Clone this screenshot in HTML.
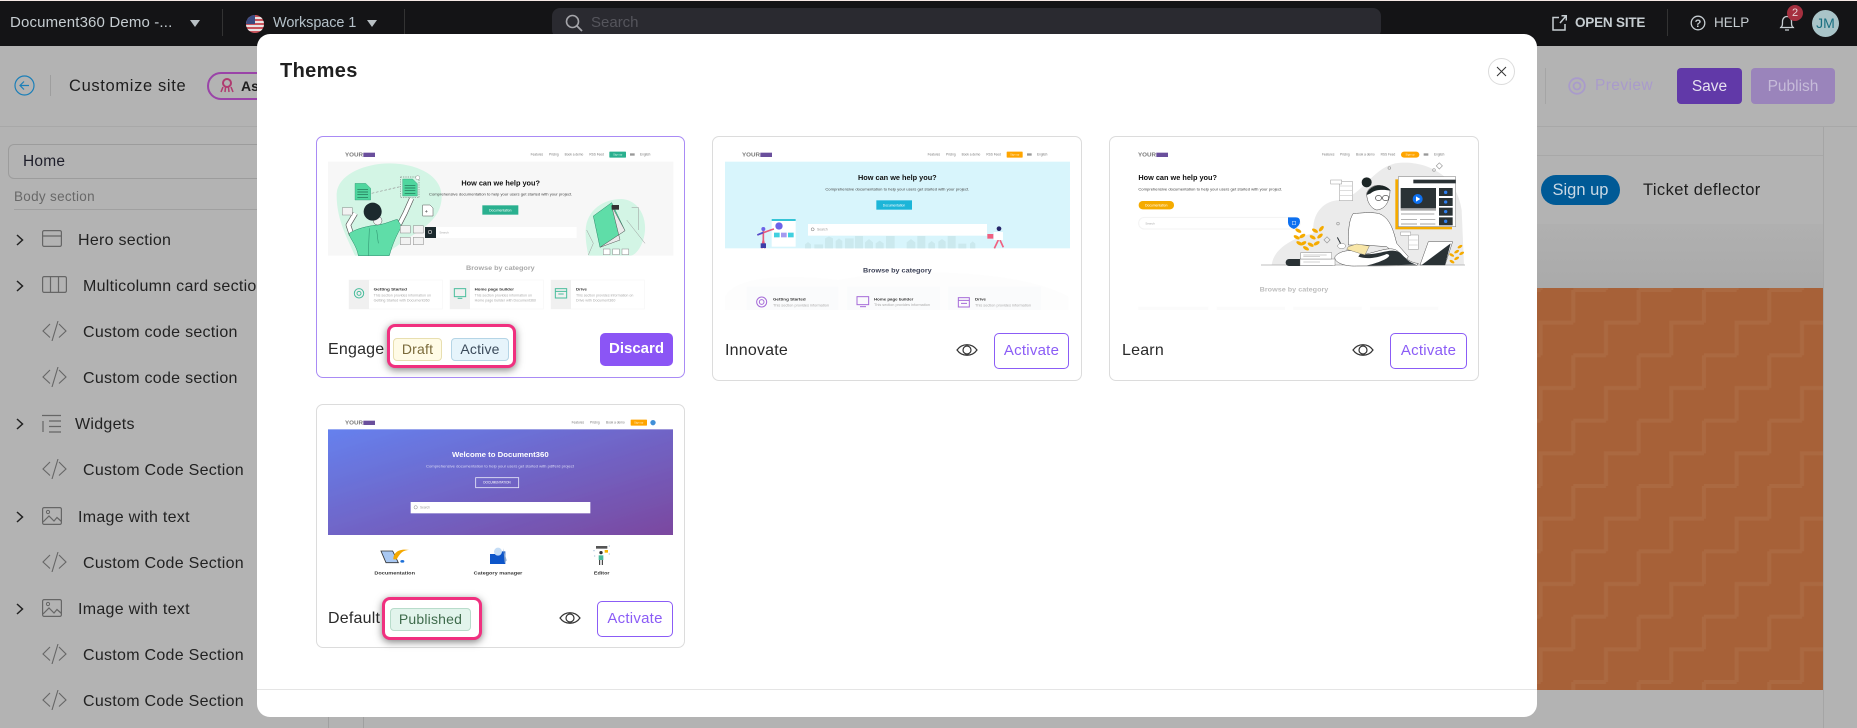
<!DOCTYPE html>
<html lang="en"><head><meta charset="utf-8"><title>Themes</title>
<style>
*{box-sizing:border-box}
html,body{margin:0;padding:0;width:1857px;height:728px;overflow:hidden;background:#b3b3b3;font-family:"Liberation Sans",sans-serif}
.a{position:absolute;white-space:nowrap}
.t{position:absolute;white-space:nowrap;line-height:20px;height:20px}
.top{position:absolute;left:0;top:0;width:1857px;height:46px;background:#141416;border-top:1px solid #f6e9e5}
.side{font-size:16px;color:#222;letter-spacing:.28px}
.card{position:absolute;background:#fff;border:1px solid #dcdcdc;border-radius:7px}
.name{font-size:16px;color:#2a2a2a;letter-spacing:.2px}
.chip{position:absolute;height:23px;border-radius:4px;font-size:14px;line-height:21px;text-align:center;letter-spacing:.2px}
.hl{position:absolute;border:3px solid #f0307f;border-radius:8px;box-shadow:0 2px 8px rgba(0,0,0,.5)}
.act{position:absolute;height:36px;border:1.300px solid #8b5cf6;border-radius:5px;color:#8b5cf6;font-size:15px;line-height:33px;text-align:center;letter-spacing:.25px;background:#fff}
svg{display:block}
svg text{font-family:"Liberation Sans",sans-serif}
</style></head><body>
<svg width="0" height="0" style="position:absolute">
<defs>
<symbol id="code" viewBox="0 0 25 20"><path d="M8 3 1 10l7 6.500M16 0 10 20M17 3l7 7-7 6.500" fill="none" stroke="#666" stroke-width="1.100"/></symbol>
<symbol id="img" viewBox="0 0 20 18"><rect x=".6" y=".6" width="18.800" height="16.800" rx="1.500" fill="none" stroke="#666" stroke-width="1.200"/><circle cx="6" cy="5" r="1.600" fill="none" stroke="#666"/><path d="M1 15l6-6 5 5 3-3.500 4.500 4" fill="none" stroke="#666" stroke-width="1.200"/></symbol>
<symbol id="chev" viewBox="0 0 8 12"><path d="M1 1l5.500 5L1 11" fill="none" stroke="#222" stroke-width="1.500"/></symbol>
<symbol id="eye" viewBox="0 0 22 16"><path d="M1 8C6 1 16 1 21 8 16 15 6 15 1 8Z" fill="none" stroke="#333" stroke-width="1.200"/><circle cx="11" cy="8" r="4" fill="none" stroke="#333" stroke-width="1.200"/></symbol>
<filter id="b" x="-5%" y="-5%" width="110%" height="110%"><feGaussianBlur stdDeviation="1"/></filter>
<pattern id="stair" patternUnits="userSpaceOnUse" width="65.330" height="65.330" x="1573.300" y="290"><path d="M65.330 0V32.670H32.670V65.330H0M0 0H32.670M0 0V32.670" fill="none" stroke="#ab6941" stroke-width="4"/></pattern>
</defs>
</svg>

<!-- top bar -->
<div class="top"></div>
<div class="t" style="left:10px;top:13px;font-size:15px;color:#c6cdd1;letter-spacing:.15px">Document360 Demo -...</div>
<svg class="a" style="left:190px;top:20px" width="10" height="7"><path d="M0 0h10L5 7z" fill="#b9c0c4"/></svg>
<div class="a" style="left:222px;top:9px;width:1px;height:27px;background:#333"></div>
<svg class="a" style="left:246px;top:15px" width="18" height="18" viewBox="0 0 18 18"><defs><clipPath id="fl"><circle cx="9" cy="9" r="9"/></clipPath></defs><g clip-path="url(#fl)"><rect width="18" height="18" fill="#c9545c"/><path d="M0 3h18M0 7h18M0 11h18M0 15h18" stroke="#e8e4e4" stroke-width="2"/><rect width="9" height="9" fill="#3b4a80"/></g></svg>
<div class="t" style="left:273px;top:13px;font-size:14.500px;color:#b4c0c8;letter-spacing:-.1px">Workspace 1</div>
<svg class="a" style="left:367px;top:20px" width="10" height="7"><path d="M0 0h10L5 7z" fill="#b9c0c4"/></svg>
<div class="a" style="left:404px;top:9px;width:1px;height:27px;background:#333"></div>
<div class="a" style="left:552px;top:8px;width:829px;height:30px;background:#2a2a30;border-radius:8px"></div>
<svg class="a" style="left:565px;top:14px" width="18" height="18" viewBox="0 0 18 18"><circle cx="7.500" cy="7.500" r="6" fill="none" stroke="#a5a5aa" stroke-width="1.600"/><path d="M12 12l5 5" stroke="#a5a5aa" stroke-width="1.800"/></svg>
<div class="t" style="left:591px;top:13px;font-size:15px;color:#55555c">Search</div>
<svg class="a" style="left:1552px;top:15px" width="15" height="16" viewBox="0 0 15 16"><path d="M7 2.500H1v12.500h12V9M8 8l6-7M9.500 .8H14.300V5.500" fill="none" stroke="#c6cdd1" stroke-width="1.500"/></svg>
<div class="t" style="left:1575px;top:13px;font-size:13.500px;font-weight:bold;color:#c6cdd1;letter-spacing:-.2px">OPEN SITE</div>
<div class="a" style="left:1667px;top:9px;width:1px;height:27px;background:#333"></div>
<svg class="a" style="left:1690px;top:15px" width="16" height="16" viewBox="0 0 16 16"><circle cx="8" cy="8" r="6.800" fill="none" stroke="#c6cdd1" stroke-width="1.300"/><text x="8" y="12" font-size="11" font-weight="bold" text-anchor="middle" fill="#c6cdd1">?</text></svg>
<div class="t" style="left:1714px;top:13px;font-size:13.500px;color:#c6cdd1;letter-spacing:0">HELP</div>
<svg class="a" style="left:1779px;top:14px" width="16" height="18" viewBox="0 0 16 18"><path d="M2 13.500c1.500-1.500 1.500-3 1.500-6C3.500 4.500 5.500 2.500 8 2.500s4.500 2 4.500 5c0 3 0 4.500 1.500 6ZM1 13.500h14M6 16h4" fill="none" stroke="#c6cdd1" stroke-width="1.300"/></svg>
<div class="a" style="left:1787px;top:5px;width:16px;height:16px;border-radius:50%;background:#a5303f;color:#e6d5d7;font-size:11px;line-height:16px;text-align:center">2</div>
<div class="a" style="left:1812px;top:10px;width:27px;height:27px;border-radius:50%;background:#a9c4c8;color:#1a6f80;font-size:14px;line-height:27px;text-align:center">JM</div>

<!-- header -->
<div class="a" style="left:0;top:126px;width:1857px;height:1px;background:#a8a8a8"></div>
<svg class="a" style="left:14px;top:75px" width="21" height="21" viewBox="0 0 21 21"><circle cx="10.500" cy="10.500" r="9.500" fill="none" stroke="#1b7fb8" stroke-width="1.200"/><path d="M15 10.500H6M10 6.500l-4 4 4 4" fill="none" stroke="#1b7fb8" stroke-width="1.200"/></svg>
<div class="a" style="left:50px;top:75px;width:1px;height:21px;background:#9e9e9e"></div>
<div class="t" style="left:69px;top:76px;font-size:16.500px;color:#1e1e1e;letter-spacing:.65px">Customize site</div>
<div class="a" style="left:207px;top:72px;width:70px;height:28px;border:2px solid #9a44a8;border-radius:14px"></div>
<svg class="a" style="left:220px;top:78px" width="14" height="15" viewBox="0 0 14 15"><circle cx="7" cy="5" r="4" fill="none" stroke="#b03a70" stroke-width="2"/><path d="M3 9l-2 5M5.500 9.500 5 14M8.500 9.500 9 14M11 9l2 5" stroke="#b03a70" stroke-width="1.500" fill="none"/></svg>
<div class="t" style="left:241px;top:76px;font-size:14px;font-weight:bold;color:#1e1e1e">As</div>
<div class="a" style="left:1545px;top:68px;width:1px;height:36px;background:#a5a5a5"></div>
<svg class="a" style="left:1568px;top:77px" width="18" height="18" viewBox="0 0 18 18"><circle cx="9" cy="9" r="7.800" fill="none" stroke="#a99bcb" stroke-width="1.800"/><circle cx="9" cy="9" r="3.500" fill="none" stroke="#a99bcb" stroke-width="1.800"/></svg>
<div class="t" style="left:1595px;top:76px;font-size:15.500px;color:#a99bcb;letter-spacing:.4px">Preview</div>
<div class="a" style="left:1677px;top:68px;width:65px;height:36px;background:#6139a8;border-radius:4px;color:#e6e0f0;font-size:15.500px;line-height:37px;text-align:center">Save</div>
<div class="a" style="left:1751px;top:68px;width:84px;height:36px;background:#9a84bb;border-radius:4px;color:#c6bbd9;font-size:15.500px;line-height:37px;text-align:center">Publish</div>

<!-- content area -->
<div class="a" style="left:1537px;top:155px;width:286px;height:1px;background:#a8a8a8"></div>
<div class="a" style="left:1537px;top:224px;width:286px;height:64px;background:linear-gradient(#b0b0b0,#aaaaaa)"></div>
<div class="a" style="left:1823px;top:127px;width:1px;height:601px;background:#a5a5a5"></div>
<div class="a" style="left:1541px;top:175px;width:79px;height:30px;border-radius:15px;background:#005a96;color:#c9d8e4;font-size:16.500px;line-height:30px;text-align:center">Sign up</div>
<div class="t" style="left:1643px;top:180px;font-size:16.500px;color:#1e1e1e;letter-spacing:.4px">Ticket deflector</div>
<svg class="a" style="left:1537px;top:288px" width="286" height="402" viewBox="1537 288 286 402"><rect x="1537" y="288" width="286" height="402" fill="#a76138"/><rect x="1537" y="288" width="286" height="402" fill="url(#stair)"/></svg>
<div class="a" style="left:328px;top:716px;width:1px;height:12px;background:#a0a0a0"></div>
<div class="a" style="left:363px;top:716px;width:1px;height:12px;background:#a0a0a0"></div>

<!-- sidebar -->
<div class="a" style="left:8px;top:144px;width:270px;height:35px;border:1px solid #9c9c9c;border-radius:6px"></div>
<div class="t" style="left:23px;top:152px;font-size:15.500px;color:#1e1e2a;letter-spacing:.2px">Home</div>
<div class="t" style="left:14px;top:187px;font-size:13.500px;font-weight:normal;color:#686868;letter-spacing:.3px">Body section</div>
<div class="a" style="left:14px;top:209px;width:250px;height:1px;background:#a0a0a0"></div>

<svg class="a" style="left:16px;top:234px" width="8" height="12"><use href="#chev"/></svg>
<svg class="a" style="left:42px;top:230px" width="20" height="17" viewBox="0 0 20 17"><rect x=".6" y=".6" width="18.800" height="15.800" rx="1.500" fill="none" stroke="#666" stroke-width="1.200"/><path d="M1 6h18" stroke="#666" stroke-width="1.200"/></svg>
<div class="t side" style="left:78px;top:231px">Hero section</div>

<svg class="a" style="left:16px;top:280px" width="8" height="12"><use href="#chev"/></svg>
<svg class="a" style="left:42px;top:276px" width="25" height="17" viewBox="0 0 25 17"><rect x=".6" y=".6" width="23.800" height="15.800" rx="1.500" fill="none" stroke="#666" stroke-width="1.200"/><path d="M8.500 1v15M16.500 1v15" stroke="#666" stroke-width="1.200"/></svg>
<div class="t side" style="left:83px;top:277px">Multicolumn card section</div>

<svg class="a" style="left:42px;top:321px" width="25" height="20"><use href="#code"/></svg>
<div class="t side" style="left:83px;top:323px">Custom code section</div>
<svg class="a" style="left:42px;top:367px" width="25" height="20"><use href="#code"/></svg>
<div class="t side" style="left:83px;top:369px">Custom code section</div>

<svg class="a" style="left:16px;top:418px" width="8" height="12"><use href="#chev"/></svg>
<svg class="a" style="left:42px;top:414px" width="20" height="20" viewBox="0 0 20 20"><path d="M0 1.500h19M1 7v11M7 7h12M7 12.500h12M7 18h12" fill="none" stroke="#666" stroke-width="1.200"/></svg>
<div class="t side" style="left:75px;top:415px">Widgets</div>

<svg class="a" style="left:42px;top:459px" width="25" height="20"><use href="#code"/></svg>
<div class="t side" style="left:83px;top:461px">Custom Code Section</div>

<svg class="a" style="left:16px;top:511px" width="8" height="12"><use href="#chev"/></svg>
<svg class="a" style="left:42px;top:507px" width="20" height="18"><use href="#img"/></svg>
<div class="t side" style="left:78px;top:508px">Image with text</div>

<svg class="a" style="left:42px;top:552px" width="25" height="20"><use href="#code"/></svg>
<div class="t side" style="left:83px;top:554px">Custom Code Section</div>

<svg class="a" style="left:16px;top:603px" width="8" height="12"><use href="#chev"/></svg>
<svg class="a" style="left:42px;top:599px" width="20" height="18"><use href="#img"/></svg>
<div class="t side" style="left:78px;top:600px">Image with text</div>

<svg class="a" style="left:42px;top:644px" width="25" height="20"><use href="#code"/></svg>
<div class="t side" style="left:83px;top:646px">Custom Code Section</div>
<svg class="a" style="left:42px;top:690px" width="25" height="20"><use href="#code"/></svg>
<div class="t side" style="left:83px;top:692px">Custom Code Section</div>

<!-- modal -->
<div class="a" style="left:257px;top:34px;width:1280px;height:683px;background:#fff;border-radius:13px"></div>
<div class="t" style="left:280px;top:60px;font-size:20px;font-weight:bold;color:#1f1f1f;line-height:22px;height:22px;letter-spacing:.35px">Themes</div>
<div class="a" style="left:1488px;top:58px;width:27px;height:27px;border:1px solid #dcdcdc;border-radius:50%"></div>
<svg class="a" style="left:1496px;top:66px" width="11" height="11"><path d="M1 1l9 9M10 1l-9 9" stroke="#333" stroke-width="1"/></svg>
<div class="a" style="left:257px;top:689px;width:1280px;height:1px;background:#e5e5e5"></div>

<!-- cards -->
<div class="card" style="left:316px;top:136px;width:369px;height:242px;border-color:#a98bf5"></div>
<div class="card" style="left:712px;top:136px;width:370px;height:245px"></div>
<div class="card" style="left:1109px;top:136px;width:370px;height:245px"></div>
<div class="card" style="left:316px;top:404px;width:369px;height:244px"></div>

<!-- Engage thumb -->
<svg class="a" style="left:310px;top:130px" width="390" height="260" viewBox="0 0 1170 780"><g filter="url(#b)">
<text x="105" y="80" font-size="17" font-weight="bold" fill="#777" textLength="54" lengthAdjust="spacingAndGlyphs">YOUR</text><rect x="160" y="68" width="35" height="13" fill="#6b4f9c"/>
<g font-size="9.500" fill="#777"><text x="662" y="77">Features</text><text x="717" y="77">Pricing</text><text x="764" y="77">Book a demo</text><text x="838" y="77">RSS Feed</text><text x="990" y="77">English</text></g>
<rect x="898" y="65" width="50" height="18" rx="2" fill="#2bb08f"/><text x="923" y="77" font-size="8" text-anchor="middle" fill="#d8f5ec">Sign up</text><rect x="960" y="70" width="14" height="7" fill="#999"/>
<rect x="54" y="95" width="1036" height="282" fill="#f7f7f7"/>
<path d="M80 190C85 130 170 100 240 100 330 102 395 140 395 200 395 270 330 300 280 335 250 355 225 377 205 377H135C115 330 78 270 80 190Z" fill="#d3f5e5"/>
<path d="M135 160h32l15 15v35h-47z" fill="#4fd69e" stroke="#2a8a6a"/><path d="M142 178h32M142 186h32M142 194h32M142 202h32" stroke="#1e6a50" stroke-width="2"/>
<path d="M185 190 270 170" stroke="#999" stroke-dasharray="8 5" stroke-width="2"/>
<rect x="272" y="141" width="55" height="62" fill="none" stroke="#888" stroke-dasharray="4 3" stroke-width="2"/><path d="M278 147h30l14 14v37h-44z" fill="#4fd69e" stroke="#2a8a6a"/><path d="M284 166h32M284 174h32M284 182h32M284 190h32" stroke="#1e6a50" stroke-width="2"/><circle cx="323" cy="143" r="6" fill="#fff" stroke="#666"/>
<path d="M125 315 115 285 136 250" fill="none" stroke="#555" stroke-width="16" stroke-linejoin="round"/><path d="M125 315 115 285 136 250" fill="none" stroke="#fff" stroke-width="12" stroke-linejoin="round"/>
<path d="M262 295 285 250 305 205" fill="none" stroke="#555" stroke-width="15" stroke-linejoin="round"/><path d="M262 295 285 250 305 205" fill="none" stroke="#fff" stroke-width="11" stroke-linejoin="round"/>
<path d="M145 377C140 345 115 320 118 310 140 295 175 288 200 285 225 283 250 270 262 268L275 290C262 310 248 340 238 377Z" fill="#5fdda8" stroke="#2a8a6a" stroke-width="1.500"/><path d="M178 295 175 377M200 300 205 340" stroke="#2a8a6a" stroke-width="1.500" fill="none"/>
<ellipse cx="203" cy="272" rx="13" ry="13" fill="#f4f4f4" stroke="#555" stroke-width="1.500"/><circle cx="188" cy="245" r="27" fill="#1e2a2e"/>
<g fill="#f2f2f2" stroke="#888" stroke-width="1.500"><rect x="97" y="233" width="30" height="22"/><rect x="271" y="287" width="30" height="22"/><rect x="310" y="287" width="30" height="22"/><rect x="271" y="322" width="30" height="22"/><rect x="310" y="322" width="30" height="22"/></g>
<path d="M338 225h22l9 9v24h-31z" fill="#fff" stroke="#555" stroke-width="1.500"/><path d="M349 240v8M345 244h8" stroke="#555" stroke-width="1.500"/>
<path d="M827 300C830 240 880 207 935 207 985 210 1008 260 1005 300 1003 340 980 377 960 377H835C830 350 826 330 827 300Z" fill="#d3f5e5"/>
<path d="M850 258 905 218 945 302 870 352Z" fill="#5fdda8" stroke="#2a8a6a" stroke-width="1.500"/><path d="M905 228 945 302 870 352 930 330Z" fill="#eaeaea" stroke="#555" stroke-width="1.500"/><rect x="905" y="225" width="22" height="14" fill="#333"/>
<path d="M830 300 850 340 835 375M950 270 1005 340M965 232 985 232 985 300" stroke="#999" fill="none" stroke-width="1.500"/>
<g fill="#fff" stroke="#888" stroke-width="1.500"><rect x="880" y="357" width="20" height="17"/><rect x="908" y="357" width="20" height="17"/><rect x="936" y="357" width="20" height="17"/></g>
<text x="572" y="166" font-size="21" font-weight="bold" text-anchor="middle" fill="#111" textLength="236" lengthAdjust="spacingAndGlyphs">How can we help you?</text>
<text x="572" y="197" font-size="12" text-anchor="middle" fill="#444" textLength="430" lengthAdjust="spacingAndGlyphs">Comprehensive documentation to help your users get started with your project.</text>
<rect x="517" y="226" width="108" height="28" fill="#2bb08f"/><text x="571" y="244" font-size="10" text-anchor="middle" fill="#fff">Documentation</text>
<rect x="345" y="291" width="455" height="33" fill="#fff"/><rect x="345" y="291" width="33" height="33" fill="#1f2a2e"/><circle cx="360" cy="306" r="5" fill="none" stroke="#ccc" stroke-width="2"/><text x="388" y="311" font-size="9" fill="#aaa">Search</text>
<text x="571" y="420" font-size="19" font-weight="bold" text-anchor="middle" fill="#a8a8a8" textLength="206" lengthAdjust="spacingAndGlyphs">Browse by category</text>
<g fill="#fff" stroke="#f6f6f6" stroke-width="2"><rect x="117" y="450" width="280" height="87"/><rect x="420" y="450" width="280" height="87"/><rect x="723" y="450" width="280" height="87"/></g>
<g fill="#f0f0f0"><rect x="117" y="450" width="60" height="87"/><rect x="420" y="450" width="60" height="87"/><rect x="723" y="450" width="60" height="87"/></g>
<g fill="none" stroke="#49bd9c" stroke-width="3"><circle cx="147" cy="490" r="14"/><circle cx="147" cy="490" r="6"/><rect x="433" y="476" width="34" height="24"/><path d="M443 505h14"/><rect x="736" y="476" width="34" height="28"/><path d="M736 484h34M745 492h16"/></g>
<g font-size="12" font-weight="bold" fill="#333"><text x="191" y="482" textLength="100" lengthAdjust="spacingAndGlyphs">Getting Started</text><text x="494" y="482" textLength="118" lengthAdjust="spacingAndGlyphs">Home page builder</text><text x="798" y="482" textLength="33" lengthAdjust="spacingAndGlyphs">Drive</text></g>
<g font-size="10" fill="#aaa"><text x="191" y="500" textLength="172" lengthAdjust="spacingAndGlyphs">This section provides information on</text><text x="191" y="515" textLength="168" lengthAdjust="spacingAndGlyphs">Getting Started with Document360</text><text x="494" y="500" textLength="172" lengthAdjust="spacingAndGlyphs">This section provides information on</text><text x="494" y="515" textLength="184" lengthAdjust="spacingAndGlyphs">Home page builder with Document360</text><text x="798" y="500" textLength="172" lengthAdjust="spacingAndGlyphs">This section provides information on</text><text x="798" y="515" textLength="118" lengthAdjust="spacingAndGlyphs">Drive with Document360</text></g>
</g></svg>

<!-- Innovate thumb -->
<svg class="a" style="left:705px;top:130px" width="390" height="260" viewBox="0 0 1170 780"><g filter="url(#b)">
<text x="111" y="80" font-size="17" font-weight="bold" fill="#777" textLength="54" lengthAdjust="spacingAndGlyphs">YOUR</text><rect x="166" y="68" width="35" height="13" fill="#6b4f9c"/>
<g font-size="9.500" fill="#777"><text x="668" y="77">Features</text><text x="723" y="77">Pricing</text><text x="770" y="77">Book a demo</text><text x="844" y="77">RSS Feed</text><text x="996" y="77">English</text></g>
<rect x="905" y="65" width="48" height="18" rx="2" fill="#ffa500"/><text x="929" y="77" font-size="8" text-anchor="middle" fill="#fff0d0">Sign up</text><rect x="966" y="70" width="14" height="7" fill="#999"/>
<rect x="60" y="95" width="1035" height="260" fill="#d8f5fc"/>
<g fill="#cbe9ee"><path d="M360 355v-30l12-6 12 6v30zM392 355v-22l10-8 10 8v22zM420 355v-30h26v30zM450 355v-37h24v37zM480 355v-18l12-10 12 10v18zM512 355v-15l12-8 12 8v15zM543 355v-37h26v37zM605 355v-18l13-10 13 10v18zM637 355v-37h24v37zM670 355v-14l10-8 10 8v14zM700 355v-20l11-8 11 8v20zM728 355v-37h24v37zM760 355v-14h24v14zM795 355v-14l8-7 8 7v14zM300 355v-12l9-7 9 7v12zM328 355v-12h26v12z"/></g>
<rect x="200" y="267" width="72" height="83" fill="#fff"/><rect x="200" y="267" width="72" height="6" fill="#35c4d6"/><circle cx="222" cy="288" r="11" fill="#6c63e8"/><rect x="207" y="308" width="17" height="14" fill="#3fd0df"/><rect x="228" y="308" width="17" height="14" fill="#a59af0"/><rect x="249" y="308" width="17" height="14" fill="#3fd0df"/>
<path d="M175 300v30M157 315l40-15 10-3M175 330l-5 25M175 330l5 25" stroke="#e85a7a" stroke-width="5" fill="none"/><circle cx="175" cy="297" r="6" fill="#6c63e8"/><path d="M157 315l18-8" stroke="#5050d0" stroke-width="5"/><rect x="167" y="340" width="16" height="14" fill="#3c3ca8"/>
<circle cx="882" cy="296" r="7" fill="#26266a"/><path d="M868 355 880 330M895 352 885 330" stroke="#f06080" stroke-width="5"/><rect x="866" y="306" width="28" height="24" fill="#fff"/><rect x="847" y="312" width="18" height="14" fill="#f06080"/>
<rect x="309" y="282" width="537" height="35" fill="#fff"/><circle cx="323" cy="298" r="4.500" fill="none" stroke="#666" stroke-width="1.500"/><text x="336" y="302" font-size="10" fill="#999">Search</text>
<text x="577" y="150" font-size="21" font-weight="bold" text-anchor="middle" fill="#111" textLength="236" lengthAdjust="spacingAndGlyphs">How can we help you?</text>
<text x="577" y="182" font-size="12" text-anchor="middle" fill="#444" textLength="432" lengthAdjust="spacingAndGlyphs">Comprehensive documentation to help your users get started with your project.</text>
<rect x="514" y="211" width="107" height="28" fill="#1fb5d8"/><text x="567" y="229" font-size="10" text-anchor="middle" fill="#fff">Documentation</text>
<path d="M60 540V500C90 440 240 430 400 450 600 410 950 420 1090 500V540Z" fill="#fdfdfd"/>
<g fill="#fafbfc"><rect x="125" y="470" width="275" height="70"/><rect x="427" y="470" width="278" height="70"/><rect x="730" y="470" width="278" height="70"/></g>
<text x="577" y="428" font-size="19" font-weight="bold" text-anchor="middle" fill="#3a3f55" textLength="206" lengthAdjust="spacingAndGlyphs">Browse by category</text>
<g fill="none" stroke="#a56bd8" stroke-width="3"><circle cx="170" cy="516" r="15"/><circle cx="170" cy="516" r="7"/><rect x="456" y="500" width="35" height="24"/><path d="M465 530h18"/><rect x="760" y="503" width="33" height="28"/><path d="M760 511h33M768 520h18"/></g>
<g font-size="12" font-weight="bold" fill="#333"><text x="204" y="512" textLength="98" lengthAdjust="spacingAndGlyphs">Getting Started</text><text x="507" y="511" textLength="118" lengthAdjust="spacingAndGlyphs">Home page builder</text><text x="810" y="512" textLength="33" lengthAdjust="spacingAndGlyphs">Drive</text></g>
<g font-size="10" fill="#aaa"><text x="204" y="529" textLength="168" lengthAdjust="spacingAndGlyphs">This section provides information</text><text x="507" y="528" textLength="168" lengthAdjust="spacingAndGlyphs">This section provides information</text><text x="810" y="529" textLength="168" lengthAdjust="spacingAndGlyphs">This section provides information</text></g>
</g></svg>

<!-- Learn thumb -->
<svg class="a" style="left:1100px;top:130px" width="390" height="260" viewBox="0 0 1170 780"><g filter="url(#b)">
<text x="114" y="80" font-size="17" font-weight="bold" fill="#777" textLength="54" lengthAdjust="spacingAndGlyphs">YOUR</text><rect x="169" y="68" width="35" height="13" fill="#6b4f9c"/>
<g font-size="9.500" fill="#777"><text x="666" y="77">Features</text><text x="720" y="77">Pricing</text><text x="768" y="77">Book a demo</text><text x="842" y="77">RSS Feed</text><text x="1002" y="77">English</text></g>
<rect x="903" y="65" width="55" height="18" rx="9" fill="#ffa500"/><text x="930" y="77" font-size="8" text-anchor="middle" fill="#fff0d0">Sign up</text><rect x="971" y="70" width="14" height="7" fill="#999"/>
<path d="M515 405C520 360 570 325 640 310 635 250 670 212 720 210 790 195 810 120 885 100 970 88 1070 130 1085 240L1092 405Z" fill="#ebebeb"/>
<path d="M483 405H1095" stroke="#aaa" stroke-width="2"/>
<text x="115" y="150" font-size="21" font-weight="bold" fill="#111" textLength="236" lengthAdjust="spacingAndGlyphs">How can we help you?</text>
<text x="115" y="182" font-size="12" fill="#444" textLength="432" lengthAdjust="spacingAndGlyphs">Comprehensive documentation to help your users get started with your project.</text>
<rect x="116" y="213" width="106" height="25" rx="12" fill="#f5ab00"/><text x="169" y="229" font-size="10" text-anchor="middle" fill="#fff">Documentation</text>
<rect x="116" y="262" width="484" height="35" rx="17" fill="#fff" stroke="#f3f3f3" stroke-width="3"/><text x="136" y="283" font-size="9" fill="#aaa">Search</text>
<path d="M564 262h24q12 0 12 12 0 14-18 23-18-6-18-20z" fill="#0b6ff0"/><rect x="577" y="274" width="10" height="10" fill="none" stroke="#cfe2ff" stroke-width="1.500"/>
<g fill="#f5ab00"><ellipse cx="595" cy="302" rx="10" ry="5" transform="rotate(30 595 302)"/><ellipse cx="607" cy="318" rx="10" ry="5" transform="rotate(-30 607 318)"/><ellipse cx="590" cy="322" rx="10" ry="5" transform="rotate(30 590 322)"/><ellipse cx="610" cy="340" rx="10" ry="5" transform="rotate(-30 610 340)"/><ellipse cx="598" cy="340" rx="10" ry="5" transform="rotate(30 598 340)"/><ellipse cx="618" cy="355" rx="10" ry="5" transform="rotate(30 618 355)"/>
<ellipse cx="664" cy="296" rx="10" ry="5" transform="rotate(-50 664 296)"/><ellipse cx="645" cy="302" rx="10" ry="5" transform="rotate(30 645 302)"/><ellipse cx="660" cy="318" rx="10" ry="5" transform="rotate(-40 660 318)"/><ellipse cx="638" cy="322" rx="10" ry="5" transform="rotate(30 638 322)"/><ellipse cx="650" cy="340" rx="10" ry="5" transform="rotate(-30 650 340)"/><ellipse cx="632" cy="344" rx="10" ry="5" transform="rotate(30 632 344)"/>
<ellipse cx="1080" cy="350" rx="8" ry="4" transform="rotate(-30 1080 350)"/><ellipse cx="1070" cy="365" rx="8" ry="4" transform="rotate(-30 1070 365)"/><ellipse cx="1085" cy="370" rx="8" ry="4" transform="rotate(-30 1085 370)"/><ellipse cx="1055" cy="375" rx="8" ry="4" transform="rotate(30 1055 375)"/><ellipse cx="1070" cy="385" rx="8" ry="4" transform="rotate(-30 1070 385)"/><ellipse cx="1056" cy="395" rx="8" ry="4" transform="rotate(30 1056 395)"/></g>
<rect x="557" y="387" width="148" height="21" rx="10" fill="#2a3236"/><rect x="600" y="387" width="105" height="20" fill="#fff" stroke="#555"/><rect x="602" y="368" width="93" height="19" fill="#fff" stroke="#555"/><path d="M610 375h70M610 380h50M610 396h50" stroke="#777"/>
<rect x="886" y="148" width="170" height="150" fill="#f5ab00"/><rect x="895" y="140" width="172" height="150" fill="#fff" stroke="#777" stroke-width="1.500"/><rect x="940" y="149" width="127" height="11" fill="#2a3236"/>
<rect x="902" y="174" width="106" height="61" fill="#2a3236"/><rect x="902" y="235" width="106" height="7" fill="#aaa"/><circle cx="953" cy="207" r="15" fill="#0b6ff0"/><path d="M948 199l13 8-13 8z" fill="#fff"/>
<g fill="#2a3236"><rect x="1017" y="174" width="41" height="24"/><rect x="1017" y="204" width="41" height="24"/><rect x="1017" y="233" width="41" height="24"/><rect x="1017" y="262" width="41" height="24"/></g><g fill="#2f7ff0"><circle cx="1037" cy="187" r="5"/><circle cx="1037" cy="216" r="5"/><circle cx="1037" cy="245" r="5"/><circle cx="1037" cy="274" r="5"/></g>
<path d="M903 252h100M903 268h48M960 268h46M903 282h48M960 282h46" stroke="#888" stroke-width="2"/>
<g fill="#fff" stroke="#999" stroke-width="1.500"><rect x="718" y="155" width="40" height="57"/><rect x="692" y="150" width="33" height="12"/><rect x="925" y="315" width="30" height="43"/><rect x="902" y="306" width="30" height="10"/></g><path d="M720 168h36M720 182h36M720 196h36M927 330h26M927 345h26" stroke="#999"/>
<path d="M760 250C790 250 800 245 835 250 870 262 880 300 890 340L925 380 915 395 860 350 790 345 745 345C745 310 745 270 760 250Z" fill="#fff" stroke="#444" stroke-width="1.500"/>
<path d="M705 380C720 360 760 355 800 372 850 360 880 345 900 370 915 385 935 400 955 400L950 407 770 408C730 410 700 395 705 380Z" fill="#fff" stroke="#444" stroke-width="1.500"/>
<path d="M780 372C840 378 870 350 900 368 915 382 925 398 950 404L800 407C860 392 880 375 860 372 830 385 800 388 775 380Z" fill="#2a3236"/>
<path d="M745 350 770 342 808 348 795 375 740 358Z" fill="#f8e6a8" stroke="#444"/>
<circle cx="800" cy="157" r="15" fill="#1f2528"/><path d="M800 190C810 160 850 160 870 180 870 215 855 238 830 240 812 235 800 215 800 190Z" fill="#fff" stroke="#444" stroke-width="1.500"/><path d="M800 195C805 165 850 155 872 182 850 178 825 178 812 190Z" fill="#1f2528"/>
<rect x="827" y="197" width="17" height="14" rx="6" fill="none" stroke="#333" stroke-width="2"/><rect x="848" y="197" width="18" height="14" rx="6" fill="none" stroke="#333" stroke-width="2"/>
<path d="M712 322 728 352" stroke="#2a3236" stroke-width="3"/><ellipse cx="725" cy="348" rx="12" ry="8" fill="#fff" stroke="#444"/>
<path d="M960 405 985 335H1058L1035 405Z" fill="#fff" stroke="#555" stroke-width="1.500"/><path d="M965 405 1052 340 1035 405Z" fill="#2a3236"/>
<g fill="none" stroke="#999" stroke-width="2"><circle cx="868" cy="114" r="4"/><circle cx="714" cy="281" r="4"/><circle cx="1002" cy="120" r="4"/><rect x="1012" y="101" width="13" height="13" transform="rotate(45 1018 107)"/><rect x="675" y="323" width="13" height="13" transform="rotate(45 681 329)"/></g>
<text x="582" y="484" font-size="19" font-weight="bold" text-anchor="middle" fill="#bdbdbd" textLength="206" lengthAdjust="spacingAndGlyphs">Browse by category</text>
<g fill="#fbfbfb"><rect x="115" y="530" width="210" height="10"/><rect x="350" y="530" width="205" height="10"/><rect x="580" y="530" width="205" height="10"/><rect x="810" y="530" width="205" height="10"/></g>
</g></svg>

<!-- Default thumb -->
<svg class="a" style="left:310px;top:400px" width="390" height="260" viewBox="0 0 1170 780"><defs><linearGradient id="gr" x1="0" y1="0" x2="1" y2="1"><stop offset="0" stop-color="#6581ee"/><stop offset="1" stop-color="#7b489f"/></linearGradient></defs><g filter="url(#b)">
<text x="105" y="74" font-size="17" font-weight="bold" fill="#777" textLength="54" lengthAdjust="spacingAndGlyphs">YOUR</text><rect x="160" y="62" width="35" height="13" fill="#6b4f9c"/>
<g font-size="9.500" fill="#777"><text x="785" y="71">Features</text><text x="840" y="71">Pricing</text><text x="888" y="71">Book a demo</text></g>
<rect x="962" y="59" width="49" height="18" rx="2" fill="#ffa500"/><text x="986" y="71" font-size="8" text-anchor="middle" fill="#fff0d0">Sign up</text><circle cx="1029" cy="68" r="8" fill="#3f8fd8"/>
<rect x="54" y="88" width="1035" height="317" fill="url(#gr)"/>
<text x="571" y="171" font-size="21" font-weight="bold" text-anchor="middle" fill="#fff" textLength="290" lengthAdjust="spacingAndGlyphs">Welcome to Document360</text>
<text x="570" y="203" font-size="11.500" text-anchor="middle" fill="#dcdcf5" textLength="444" lengthAdjust="spacingAndGlyphs">Comprehensive documentation to help your users get started with pdfferd project</text>
<rect x="497" y="233" width="129" height="30" fill="none" stroke="#e8e8f8" stroke-width="2.500"/><text x="561" y="251" font-size="9.500" text-anchor="middle" fill="#fff">DOCUMENTATION</text>
<rect x="302" y="306" width="539" height="34" fill="#fff"/><circle cx="317" cy="322" r="5" fill="none" stroke="#888" stroke-width="1.500"/><text x="330" y="326" font-size="9.500" fill="#999">Search</text>
<path d="M213 453 248 453 265 488 228 488Z" fill="#a9c8f2" stroke="#333" stroke-width="2.500"/><path d="M250 478C250 455 270 445 298 450 275 450 268 465 260 478Z" fill="#f5a800"/><ellipse cx="277" cy="484" rx="6" ry="4" fill="#1f6fd8"/>
<path d="M540 462h18l6-8h22v38h-46z" fill="#0e55c9"/><circle cx="564" cy="455" r="12" fill="#c5ddf6"/><path d="M580 445l10 36-6 8z" fill="#8aa8d0"/>
<rect x="858" y="438" width="34" height="8" fill="#555"/><circle cx="873" cy="458" r="5" fill="#333"/><path d="M866 466h14v14h-14z" fill="#49b89a"/><path d="M869 480v15M877 480v15" stroke="#222" stroke-width="3"/><rect x="884" y="450" width="10" height="8" fill="#f5b400"/><g fill="#a8c0d8"><circle cx="898" cy="438" r="2"/><circle cx="852" cy="452" r="2"/><circle cx="898" cy="462" r="2"/><circle cx="854" cy="468" r="2"/></g>
<g font-size="14" font-weight="bold" fill="#333" text-anchor="middle"><text x="254" y="524" textLength="122" lengthAdjust="spacingAndGlyphs">Documentation</text><text x="564" y="524" textLength="146" lengthAdjust="spacingAndGlyphs">Category manager</text><text x="875" y="524" textLength="47" lengthAdjust="spacingAndGlyphs">Editor</text></g>
</g></svg>

<!-- card footers -->
<div class="t name" style="left:328px;top:340px">Engage</div>
<div class="hl" style="left:387px;top:324px;width:129px;height:44px;background:#fff"></div>
<div class="chip" style="left:393px;top:338px;width:49px;background:#fffbe6;border:1px solid #e8dfb0;color:#7a6a3a">Draft</div>
<div class="chip" style="left:451px;top:338px;width:58px;background:#e6f4fb;border:1px solid #b5d5e6;color:#3b4a5a">Active</div>
<div class="a" style="left:600px;top:333px;width:73px;height:33px;background:#8b55f5;border-radius:5px;color:#fff;font-size:15px;font-weight:bold;line-height:31px;text-align:center">Discard</div>

<div class="t name" style="left:725px;top:341px">Innovate</div>
<svg class="a" style="left:956px;top:342px" width="22" height="16"><use href="#eye"/></svg>
<div class="act" style="left:994px;top:333px;width:75px">Activate</div>

<div class="t name" style="left:1122px;top:341px">Learn</div>
<svg class="a" style="left:1352px;top:342px" width="22" height="16"><use href="#eye"/></svg>
<div class="act" style="left:1390px;top:333px;width:77px">Activate</div>

<div class="t name" style="left:328px;top:609px">Default</div>
<div class="hl" style="left:382px;top:597px;width:100px;height:43px;background:#fff"></div>
<div class="chip" style="left:390px;top:608px;width:81px;background:#e2f4ec;border:1px solid #b8dccb;color:#3f6b4c">Published</div>
<svg class="a" style="left:559px;top:610px" width="22" height="16"><use href="#eye"/></svg>
<div class="act" style="left:597px;top:601px;width:76px">Activate</div>
</body></html>
